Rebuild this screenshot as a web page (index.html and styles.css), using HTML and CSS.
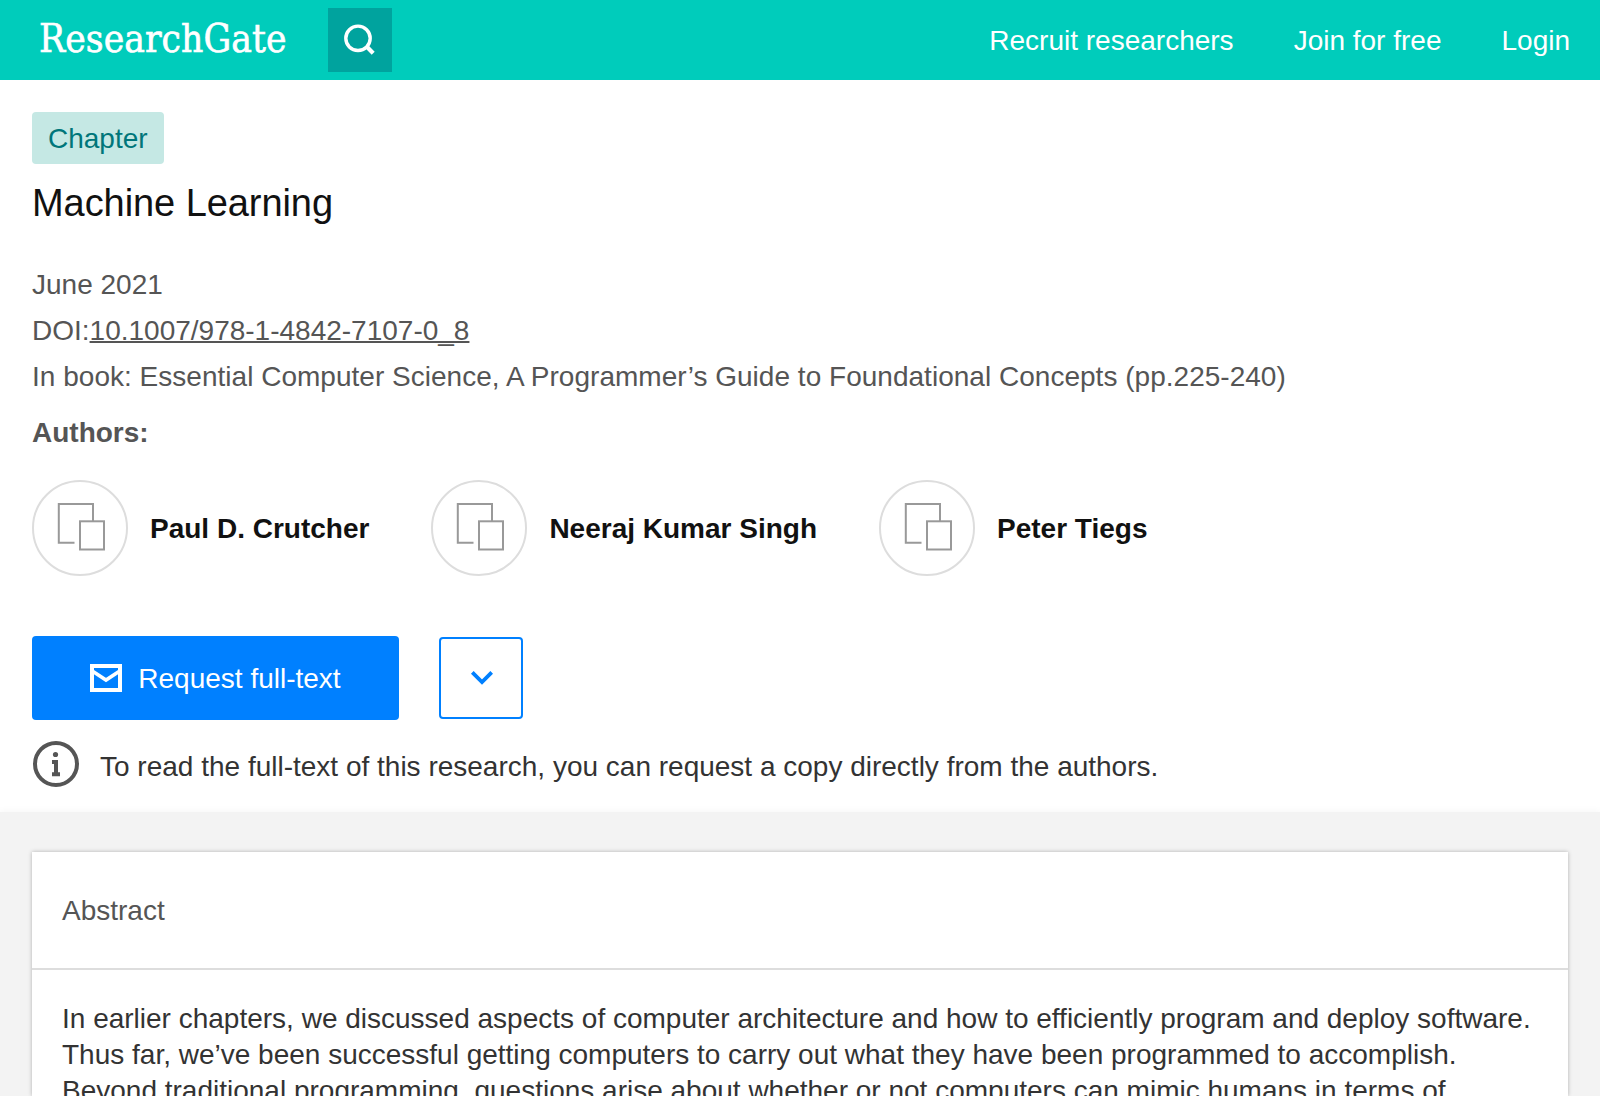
FILE: index.html
```html
<!DOCTYPE html>
<html lang="en">
<head>
<meta charset="utf-8">
<title>Machine Learning | ResearchGate</title>
<link rel="stylesheet" href="styles.css">
</head>
<body>
<svg class="defs" width="0" height="0" aria-hidden="true">
  <symbol id="avatar" viewBox="0 0 96 96">
    <circle cx="48" cy="48" r="47" fill="#fff" stroke="#ddd" stroke-width="2"/>
    <path d="M42.5 62.8H26.8V24H61V41" fill="none" stroke="#999" stroke-width="2"/>
    <rect x="48" y="41.3" width="24" height="28.2" fill="#fff" stroke="#999" stroke-width="2"/>
  </symbol>
</svg>
<header class="topbar">
  <a class="logo">ResearchGate</a>
  <button class="search" aria-label="Search">
    <svg width="64" height="64" viewBox="0 0 64 64" fill="none" stroke="#fff">
      <circle cx="30" cy="30.3" r="12.2" stroke-width="3.4"/>
      <path d="M38.6 38.6L45.2 45.2" stroke-width="4.2"/>
    </svg>
  </button>
  <nav class="nav"><a>Recruit researchers</a><a>Join for free</a><a>Login</a></nav>
</header>
<main>
  <section class="intro">
    <span class="badge">Chapter</span>
    <h1 class="title">Machine Learning</h1>
    <div class="meta">
      <div>June 2021</div>
      <div>DOI:<a class="doi">10.1007/978-1-4842-7107-0_8</a></div>
      <div class="book">In book: Essential Computer Science, A Programmer’s Guide to Foundational Concepts (pp.225-240)</div>
    </div>
    <div class="authors-label">Authors:</div>
    <div class="authors">
      <div class="author"><svg class="avatar"><use href="#avatar"/></svg><span class="name">Paul D. Crutcher</span></div>
      <div class="author"><svg class="avatar"><use href="#avatar"/></svg><span class="name">Neeraj Kumar Singh</span></div>
      <div class="author"><svg class="avatar"><use href="#avatar"/></svg><span class="name">Peter Tiegs</span></div>
    </div>
    <div class="actions">
      <button class="request">
        <svg width="32" height="28" viewBox="0 0 32 28" fill="none" stroke="#fff" stroke-width="4">
          <rect x="2" y="2" width="28" height="24"/>
          <path d="M3 7.6L16 16L29 7.6" stroke-width="3.6"/>
        </svg>
        <span class="request-label">Request full-text</span>
      </button>
      <button class="more" aria-label="More options">
        <svg width="24" height="16" viewBox="0 0 24 16" fill="none" stroke="#0080ff" stroke-width="3.8"><path d="M3.3 2.4L13 12L22.7 2.4"/></svg>
      </button>
    </div>
    <div class="hint">
      <svg width="48" height="48" viewBox="0 0 48 48">
        <circle cx="24" cy="24" r="21" fill="none" stroke="#555" stroke-width="4"/>
        <circle cx="23.5" cy="14.5" r="2.6" fill="#555"/>
        <path d="M20 20H26V32.2H28V36.2H20V32.2H22V24H20Z" fill="#555"/>
      </svg>
      <p class="hint-text">To read the full-text of this research, you can request a copy directly from the authors.</p>
    </div>
  </section>
  <section class="content">
    <article class="card">
      <h2 class="card-head">Abstract</h2>
      <p class="card-body">In earlier chapters, we discussed aspects of computer architecture and how to efficiently program and deploy software. Thus far, we’ve been successful getting computers to carry out what they have been programmed to accomplish. Beyond traditional programming, questions arise about whether or not computers can mimic humans in terms of</p>
    </article>
  </section>
</main>
</body>
</html>
```
FILE: styles.css
```css
* { box-sizing: border-box; margin: 0; padding: 0; }
html, body { height: 100%; overflow: hidden; }
body {
  background: #fff;
  color: #333;
  font: 28px/36px "Liberation Sans", Arial, sans-serif;
}
button { border: 0; font: inherit; display: flex; align-items: center; justify-content: center; }
svg { display: block; flex: none; }
.defs { position: absolute; }

.topbar {
  display: flex;
  align-items: center;
  height: 80px;
  padding: 0 30px 0 39px;
  background: #00ccbb;
  color: #fff;
}
.logo {
  width: 289px;
  padding-bottom: 2px;
  font: 38.5px/76px "DejaVu Serif Condensed", "DejaVu Serif", serif;
  font-stretch: condensed;
  letter-spacing: .1px;
  -webkit-text-stroke: .6px #fff;
  white-space: nowrap;
}
.search { width: 64px; height: 64px; background: #00a39e; }
.nav { display: flex; gap: 60px; margin-left: auto; padding-top: 2px; white-space: nowrap; }

.intro { padding: 32px 32px 24px; }
.badge {
  display: block;
  width: fit-content;
  height: 52px;
  padding: 1px 16px 0;
  line-height: 52px;
  border-radius: 4px;
  background: #c5e8e4;
  color: #00767a;
}
.title { margin-top: 16px; font-size: 38px; font-weight: 400; line-height: 46px; letter-spacing: -.07px; color: #111; }
.meta { margin-top: 36px; line-height: 46px; color: #555; white-space: nowrap; }
.doi { text-decoration: underline; text-decoration-skip-ink: none; text-decoration-thickness: 2px; }
.book { letter-spacing: .02px; }
.authors-label { margin-top: 15px; font-weight: 700; color: #555; }
.authors { display: flex; gap: 62px; margin-top: 29px; }
.author { display: flex; align-items: center; gap: 22px; font-weight: 700; color: #111; white-space: nowrap; }
.name { padding-top: 2px; }
.avatar { width: 96px; height: 96px; }

.actions { display: flex; align-items: center; gap: 40px; margin-top: 60px; }
.request { width: 367px; height: 84px; gap: 16px; border-radius: 4px; background: #0080ff; color: #fff; }
.request-label { padding-top: 2px; }
.more { width: 84px; height: 82px; border: 2px solid #0080ff; border-radius: 4px; background: #fff; }
.hint { display: flex; gap: 20px; margin-top: 20px; }
.hint-text { padding-top: 9px; }

.content { padding: 40px 32px 0; background: #f3f3f3; box-shadow: 0 0 8px #f3f3f3; }
.card { height: 244px; background: #fff; box-shadow: 0 0 4px rgba(0, 0, 0, .28); }
.card-head {
  height: 118px;
  padding: 1px 0 0 30px;
  border-bottom: 2px solid #ddd;
  font-size: 28px;
  font-weight: 400;
  line-height: 116px;
  color: #555;
}
.card-body { padding: 31px 30px 0; }
```
